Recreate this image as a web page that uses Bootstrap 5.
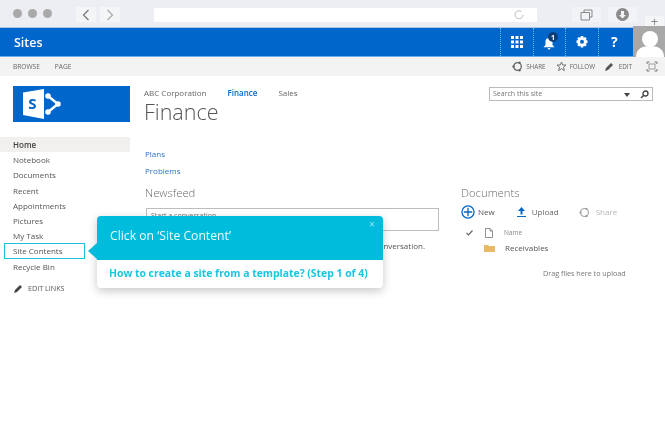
<!DOCTYPE html>
<html lang="en">
<head>
<meta charset="utf-8">
<title>Finance</title>
<link rel="stylesheet" href="https://cdn.jsdelivr.net/npm/bootstrap@5.3.0/dist/css/bootstrap.min.css">
<style>
html,body{height:421px;overflow:hidden;background:#fff}
body{font-family:"Open Sans","Liberation Sans",sans-serif;color:#555;font-size:8px;position:relative;line-height:1.2;filter:blur(.35px)}
.chrome{height:27px;background:#eceef3;padding-left:13px}
.dots{gap:6px;width:63px;height:27px}
.dot{width:9px;height:9px;border-radius:50%;background:#a9a9a9}
.navb{width:20px;height:15px;background:#f4f5f7;margin-top:7px}
.navb-first{margin-right:4px}
.urlbar{width:383px;height:14px;background:#fff;margin:8px 0 0 34px;padding-right:13px}
.winb{width:29px;height:15px;background:#f2f3f6;margin:7px 0 0 7px}
.winb-first{margin-left:35px}
.plus{width:19px;height:11px;background:#f4f5f7;font-size:13px;line-height:11px;color:#8a8a8a;margin:16px 0 0 8px;text-align:center}
.suite{height:30px;background:#0066cc;border-top:1px solid #a9c6e4;border-bottom:1px solid #6aaee8;color:#fff;padding-left:14px}
.suite-title{font-size:12.5px;font-weight:600}
.sbtn{width:32.5px;height:100%;border-left:1px dotted #5cc0e6}
.sbtn-help{font-size:14px}
.avatar{width:32px;height:31px;background:#a8a8a8;margin:-2px 0 -1px 3px;overflow:hidden;flex:none}
.ribbon{height:19px;background:#f3f3f3;padding:0 7px 0 13px;font-size:6.6px;color:#666}
.gap-tabs{gap:15px}
.rib-acts{gap:10px;font-size:6.3px}
.rib-act{gap:3px}
.layout{display:grid;grid-template-columns:131px 330px 204px}
.logo{width:117px;height:36px;background:#0066cc;margin:10px 0 15px 13px;padding-left:9px}
.side-item{height:15.2px;padding-left:13px;font-size:8px;color:#555;line-height:15.5px}
.side-home{background:#f1f0ef;font-weight:600;width:130px;color:#444}
.side-sel{position:relative}
.side-box{position:absolute;left:4px;top:-.5px;width:81px;height:16px;border:1.5px solid #1cc0de}
.edit{margin:10px 0 0 14px;font-size:7.2px;gap:5px;color:#555}
.main-col{padding:12px 0 0 13px}
.crumbs{gap:21px;font-size:8px;color:#666;height:10px}
.crumb-on{color:#0a66c2;font-weight:600}
.page-h{font-size:21.5px;line-height:26px;color:#555;margin:1px 0 24px;font-weight:300}
.linkb{color:#2a72c4;font-size:8px;height:17px;display:block;margin-left:1px}
.sect{font-size:11.3px;line-height:15px;color:#6b6b6b;font-weight:300}
.sect-news{margin:2px 0 0 1px}
.convo{width:293px;height:23px;border:1px solid #bdbdbd;margin:8px 0 0 2px;padding:3px 4px;font-size:7px;color:#777}
.after{text-align:right;padding-right:36px;margin-top:10px;color:#555}
.docs{padding:109px 0 0 0}
.srch{left:28px;top:11px;width:164px;height:14px;border:1px solid #bbb;padding:2px 3px;font-size:7px;color:#777}
.doc-acts{margin-top:4px;height:16px;color:#555}
.doc-row{display:flex;align-items:center;height:16px}
.doc-head{margin-top:5px;font-size:6.5px;color:#888;height:15px}
.doc-check{margin-left:5px}
.doc-file{margin-left:12px}
.doc-name{margin-left:11px}
.doc-folder{margin-left:23px}
.doc-label{margin-left:10px}
.act-new{margin-left:3px}
.act-up{margin-left:22px}
.act-uptext{margin-left:6px;color:#666}
.act-share{margin-left:20px}
.act-sharetext{margin-left:6px;color:#b5b5b5}
.drag{margin:13px 0 0 82px;font-size:7.2px;color:#777;white-space:nowrap}
.tour{position:absolute;left:97px;top:216px;width:286px;height:72px;background:#fff;border-radius:4px;box-shadow:0 3px 10px rgba(0,0,0,.22)}
.tour-head{height:44px;background:#00bcdc;border-radius:4px 4px 0 0;color:#e9fbff;font-size:12.2px;font-weight:500;padding-left:13px;line-height:39px;position:relative}
.tour-x{position:absolute;right:8px;top:3px;font-size:10px;line-height:1;color:#9fe5f2;font-weight:400}
.tour-foot{color:#1cc5e0;font-size:10.4px;font-weight:700;padding:7px 0 0 12px;white-space:nowrap}
.tour-arrow{position:absolute;left:-9px;top:27px;width:0;height:0;border-style:solid;border-width:8px 9px 8px 0;border-color:transparent #00bcdc transparent transparent}
</style>
</head>
<body>
<div class="chrome d-flex align-items-start">
  <div class="dots d-flex align-items-center"><span class="dot"></span><span class="dot"></span><span class="dot"></span></div>
  <div class="navb navb-first d-flex align-items-center justify-content-center">
    <svg width="8" height="12" viewBox="0 0 8 12"><path d="M6.500 1L1.500 6l5 5" fill="none" stroke="#777" stroke-width="1.200"/></svg></div>
  <div class="navb d-flex align-items-center justify-content-center">
    <svg width="8" height="12" viewBox="0 0 8 12"><path d="M1.500 1l5 5-5 5" fill="none" stroke="#aaa" stroke-width="1.200"/></svg></div>
  <div class="urlbar d-flex align-items-center justify-content-end">
    <svg width="10" height="10" viewBox="0 0 10 10"><path d="M7.500 1.600A4 4 0 1 0 9 5" fill="none" stroke="#bbb" stroke-width="1"/></svg></div>
  <div class="winb winb-first d-flex align-items-center justify-content-center">
    <svg width="13" height="12" viewBox="0 0 13 12"><path d="M4 3V1h8v7H9.500M1 3.500h8.500V11H1z" fill="none" stroke="#888" stroke-width="1"/></svg></div>
  <div class="winb d-flex align-items-center justify-content-center">
    <svg width="13" height="13" viewBox="0 0 13 13"><circle cx="6.500" cy="6.500" r="6.500" fill="#8b8b8b"/><path d="M5 3h3v4h2L6.500 10.500 3 7h2z" fill="#f2f3f6"/></svg></div>
  <div class="plus">+</div>
</div>
<div class="suite d-flex align-items-center">
  <div class="suite-title flex-grow-1">Sites</div>
  <div class="sbtn d-flex align-items-center justify-content-center">
    <svg width="12" height="12" viewBox="0 0 12 12" fill="#fff"><rect width="3" height="3"/><rect x="4.500" width="3" height="3"/><rect x="9" width="3" height="3"/><rect y="4.500" width="3" height="3"/><rect x="4.500" y="4.500" width="3" height="3"/><rect x="9" y="4.500" width="3" height="3"/><rect y="9" width="3" height="3"/><rect x="4.500" y="9" width="3" height="3"/><rect x="9" y="9" width="3" height="3"/></svg></div>
  <div class="sbtn d-flex align-items-center justify-content-center">
    <svg width="20" height="20" viewBox="0 0 20 20"><path d="M10 6a3.500 3.500 0 0 1 3.500 3.500V13l2 2.200H4.500l2-2.200V9.500A3.500 3.500 0 0 1 10 6zM8.500 16h3L10 18z" fill="#fff"/><circle cx="14" cy="5" r="5" fill="#0a3f78"/><text x="14" y="7.500" text-anchor="middle" font-size="7" font-weight="700" fill="#fff">1</text></svg></div>
  <div class="sbtn d-flex align-items-center justify-content-center">
    <svg width="12" height="12" viewBox="0 0 12 12"><path d="M4.800 0h2.400l.4 1.700 1.500-.8 1.600 1.600-.9 1.500 1.700.5v2.400l-1.700.5.900 1.500-1.600 1.600-1.500-.8-.4 1.700H4.800l-.4-1.700-1.500.8L1.300 8.900l.9-1.500L.5 6.900V4.500l1.700-.5-.9-1.500L2.900.9l1.500.8z" fill="#fff"/><circle cx="6" cy="5.700" r="2" fill="#0066cc"/></svg></div>
  <div class="sbtn sbtn-help d-flex align-items-center justify-content-center fw-bold">?</div>
  <div class="avatar">
    <svg width="32" height="31" viewBox="0 0 32 31"><circle cx="17" cy="13" r="8" fill="#fff"/><path d="M3 31c0-8 6-11 14-11s14 3 14 11z" fill="#fff"/></svg></div>
</div>
<div class="ribbon d-flex align-items-center justify-content-between">
  <div class="d-flex gap-tabs"><span>BROWSE</span><span>PAGE</span></div>
  <div class="d-flex align-items-center rib-acts">
    <span class="d-flex align-items-center rib-act"><svg width="11" height="11" viewBox="0 0 11 11"><circle cx="5.500" cy="5.500" r="3.800" fill="none" stroke="#666" stroke-width="1.300"/><circle cx="1.500" cy="5.500" r="1.200" fill="#666"/><circle cx="7.500" cy="1.800" r="1.200" fill="#666"/><circle cx="7.500" cy="9.200" r="1.200" fill="#666"/></svg>SHARE</span>
    <span class="d-flex align-items-center rib-act"><svg width="11" height="11" viewBox="0 0 11 11"><path d="M5.500 1l1.300 3h3.200L7.500 6.200l.9 3.300-2.900-1.800-2.900 1.800.9-3.300L1 4h3.200z" fill="none" stroke="#666" stroke-width=".9"/></svg>FOLLOW</span>
    <span class="d-flex align-items-center rib-act"><svg width="9" height="9" viewBox="0 0 9 9"><path d="M0 9l1-3 5-5 2 2-5 5z" fill="#555"/></svg>&nbsp;EDIT</span>
    <svg class="ms-1" width="12" height="11" viewBox="0 0 12 11"><path d="M1 3V1h2.500M8.500 1H11v2M1 8v2h2.500M8.500 10H11V8" fill="none" stroke="#777"/><rect x="3" y="3" width="6" height="5" fill="none" stroke="#888" stroke-width=".8"/></svg>
  </div>
</div>
<div class="layout">
  <div>
    <div class="logo d-flex align-items-center">
      <svg width="40" height="32" viewBox="0 0 40 32"><path d="M1 4.500L22 1v30L1 27z" fill="#fff"/><text x="10.500" y="21" text-anchor="middle" font-size="15" font-weight="700" fill="#0066cc">S</text><path d="M24 8h2l10 8-10 8h-2" fill="none" stroke="#fff" stroke-width="2.500"/><circle cx="26" cy="8" r="2.800" fill="#fff"/><circle cx="36" cy="16" r="2.800" fill="#fff"/><circle cx="26" cy="24" r="2.800" fill="#fff"/></svg>
    </div>
    <div class="side-item side-home">Home</div>
    <div class="side-item">Notebook</div>
    <div class="side-item">Documents</div>
    <div class="side-item">Recent</div>
    <div class="side-item">Appointments</div>
    <div class="side-item">Pictures</div>
    <div class="side-item">My Task</div>
    <div class="side-item side-sel">Site Contents<span class="side-box"></span></div>
    <div class="side-item">Recycle Bin</div>
    <div class="edit d-flex align-items-center"><svg width="9" height="9" viewBox="0 0 9 9"><path d="M0 9l1-3 5-5 2 2-5 5z" fill="#444"/></svg>EDIT LINKS</div>
  </div>
  <div class="main-col">
    <div class="crumbs d-flex"><span>ABC Corporation</span><span class="crumb-on">Finance</span><span>Sales</span></div>
    <div class="page-h">Finance</div>
    <a class="linkb text-decoration-none">Plans</a>
    <a class="linkb text-decoration-none">Problems</a>
    <div class="sect sect-news">Newsfeed</div>
    <div class="convo">Start a conversation</div>
    <div class="after">conversation.</div>
  </div>
  <div class="docs position-relative">
    <div class="srch position-absolute">
      <div class="d-flex justify-content-between align-items-center"><span>Search this site</span><span class="d-flex align-items-center gap-1"><svg width="6" height="4" viewBox="0 0 6 4"><path d="M0 0h6L3 4z" fill="#444"/></svg>&nbsp;<svg width="9" height="9" viewBox="0 0 9 9"><circle cx="5.500" cy="3.500" r="2.500" fill="none" stroke="#444" stroke-width="1.300"/><path d="M3.500 5.500L1 8" stroke="#444" stroke-width="1.500"/></svg></span></div>
    </div>
    <div class="sect">Documents</div>
    <div class="doc-acts d-flex align-items-center">
      <svg width="14" height="14" viewBox="0 0 15 15"><circle cx="7.500" cy="7.500" r="6.500" fill="none" stroke="#0a66c2" stroke-width="1.400"/><path d="M7.500 3v9M3 7.500h9" stroke="#0a66c2" stroke-width="1.400"/></svg>
      <span class="act-new">New</span>
      <svg class="act-up" width="9" height="10" viewBox="0 0 9 10"><path d="M4.500 0L8 4H5.500v3.500h-2V4H1zM0 9h9v1H0z" fill="#0a66c2"/></svg>
      <span class="act-uptext">Upload</span>
      <svg class="act-share" width="11" height="11" viewBox="0 0 11 11"><circle cx="5.500" cy="5.500" r="4" fill="none" stroke="#aaa" stroke-width="1.200"/><circle cx="1.500" cy="5.500" r="1.100" fill="#999"/><circle cx="7.500" cy="1.800" r="1.100" fill="#999"/><circle cx="7.500" cy="9.200" r="1.100" fill="#999"/></svg>
      <span class="act-sharetext">Share</span>
    </div>
    <div class="doc-row doc-head">
      <svg class="doc-check" width="7" height="6" viewBox="0 0 7 6"><path d="M.5 3l2 2L6.500.5" fill="none" stroke="#666" stroke-width="1.200"/></svg>
      <svg class="doc-file" width="8" height="10" viewBox="0 0 8 10"><path d="M.5.500h4.500L7.500 3v6.500h-7zM5 .5V3h2.500" fill="none" stroke="#777" stroke-width=".8"/></svg>
      <span class="doc-name">Name</span>
    </div>
    <div class="doc-row">
      <svg class="doc-folder" width="11" height="8" viewBox="0 0 11 8"><path d="M0 1h4l1 1h6v6H0z" fill="#e9b96a"/></svg>
      <span class="doc-label">Receivables</span>
    </div>
    <div class="drag">Drag files here to upload</div>
  </div>
</div>
<div class="tour">
  <span class="tour-arrow"></span>
  <div class="tour-head">Click on ‘Site Content’<span class="tour-x">×</span></div>
  <div class="tour-foot">How to create a site from a template? (Step 1 of 4)</div>
</div>
</body>
</html>
